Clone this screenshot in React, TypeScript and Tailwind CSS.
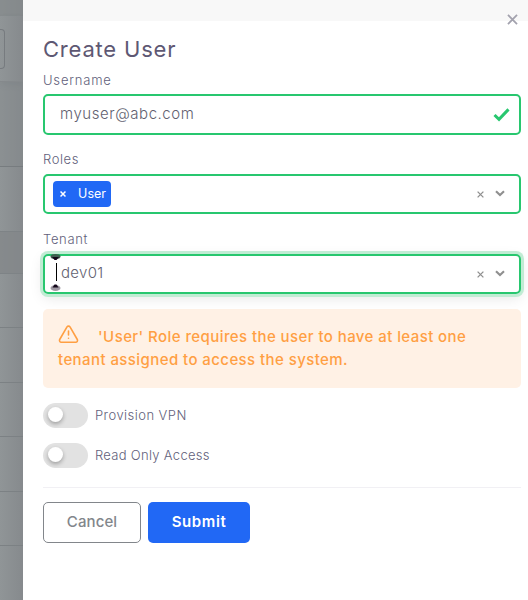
import React from "react";

function ClearIcon({ className = "", size = 7, width = 1.5 }: { className?: string; size?: number; width?: number }) {
  return (
    <svg className={className} width={size} height={size} viewBox="0 0 8 8" fill="none" stroke="currentColor" strokeWidth={width}>
      <path d="M.7.7 7.3 7.3M7.3.7.7 7.3" />
    </svg>
  );
}

function SelectControls() {
  return (
    <div className="flex items-center gap-[11px] text-[#8f8f8f]">
      <ClearIcon />
      <svg className="mb-[2px]" width="10" height="7" viewBox="0 0 10 7" fill="none" stroke="currentColor" strokeWidth="2.1">
        <path d="M1 1.2 5 5 9 1.2" />
      </svg>
    </div>
  );
}

function Label({ text, className }: { text: string; className: string }) {
  return (
    <div className="flex h-5 items-center pt-px text-[13px] font-light text-[#625f7b]">
      <span className={className}>{text}</span>
    </div>
  );
}

function Toggle({ text, className }: { text: string; className: string }) {
  return (
    <div className="flex h-[25px] items-center gap-[7px]">
      <div className="flex h-[25px] w-[45px] items-center rounded-full bg-[#e2e2e2] pb-[2px] pl-[5px]">
        <div className="h-[15px] w-[15px] rounded-full bg-white shadow-[0_2px_4px_rgba(0,0,0,0.3)]" />
      </div>
      <Label text={text} className={className} />
    </div>
  );
}

function Backdrop() {
  return (
    <div className="flex h-[600px] w-[23px] shrink-0 flex-col overflow-hidden bg-linear-to-r from-[#909597] to-[#868a8d]">
      <div className="h-4 shrink-0 bg-[#84888b]/60" />
      <div className="h-[66px] shrink-0 border-b border-[#85898c] pt-[13px] shadow-[0_3px_6px_rgba(60,65,70,0.12)]">
        <div className="h-10 w-[5px] rounded-r-[4px] border border-l-0 border-[#777b7f]" />
      </div>
      <div className="h-[85px] shrink-0 border-b border-[#777c7f] bg-[#85898c]/40" />
      <div className="h-[64px] shrink-0" />
      <div className="h-[43px] shrink-0 border-y border-[#7e8386] bg-[#83878a]/80" />
      <div className="h-[54px] shrink-0 border-b border-[#7c8184]" />
      <div className="h-[55px] shrink-0 border-b border-[#7c8184]" />
      <div className="h-[54px] shrink-0 border-b border-[#7c8184]" />
      <div className="h-[55px] shrink-0 border-b border-[#7c8184]" />
      <div className="h-[54px] shrink-0 border-b border-[#7c8184]" />
    </div>
  );
}

export default function App() {
  return (
    <div className="flex h-[600px] w-[528px] overflow-hidden bg-white font-['Inter',sans-serif]">
      <Backdrop />
      <div className="relative flex-1">
        <div className="h-[21px] bg-[#f8f8f8]" />
        <ClearIcon className="absolute top-[14px] right-[10px] text-[#a3a2ae]" size={11} width={1.3} />
        <div className="flex flex-col pr-[7px] pl-5">
          <h1 className="mt-[13px] flex h-[30px] items-center text-[22px] text-[#5e5873]">
            <span className="tracking-[0.8px]">Create User</span>
          </h1>
          <div className="mt-[6px]"><Label text="Username" className="tracking-[0.8px]" /></div>
          <div className="mt-1 flex h-[41px] items-center justify-between rounded-[5px] border-2 border-[#28c76f] pr-[9px] pl-[15px] text-[15px] font-light text-[#625f70]">
            <span className="tracking-[0.55px]">myuser@abc.com</span>
            <svg width="17" height="14" viewBox="0 0 17 14" fill="none" stroke="#28c76f" strokeWidth="3">
              <path d="M1.5 7 6 11.3 15.5 1.4" />
            </svg>
          </div>
          <div className="mt-[14px]"><Label text="Roles" className="tracking-[0.6px]" /></div>
          <div className="mt-[5px] flex h-10 items-center justify-between rounded-[5px] border-2 border-[#28c76f] pr-[14px] pl-2">
            <div className="flex h-[26px] w-[58px] items-center justify-between rounded-[4px] bg-[#2168f5] pr-[5px] pl-[7px] text-[12.5px] text-white">
              <ClearIcon size={6} width={2} />
              <span>User</span>
            </div>
            <SelectControls />
          </div>
          <div className="mt-[15px]"><Label text="Tenant" className="tracking-[0.65px]" /></div>
          <div className="relative mt-[5px] flex h-10 items-center justify-between rounded-[5px] border-2 border-[#28c76f] pr-[14px] pl-4 text-[15px] font-light text-[#625f70] shadow-[0_0_0_3px_#c1ecd4,0_4px_14px_rgba(0,0,0,0.1)]">
            <span className="pb-[2px] tracking-[0.3px]">dev01</span>
            <SelectControls />
            <svg className="absolute top-[-3px] left-[5px]" width="11" height="40" viewBox="0 0 11 40">
              <ellipse cx="5.5" cy="3.5" rx="5" ry="2.5" fill="#3f5f50" />
              <path d="M2 4h7L6.5 7h-2z" fill="#130619" />
              <path d="M6.5 10v18" stroke="#000" />
              <ellipse cx="5.5" cy="35" rx="5" ry="3" fill="#9f99a3" />
              <path d="M2.5 34.5 4.5 31.5h2L8.5 34.5z" fill="#130619" />
            </svg>
          </div>
          <div className="mt-[15px] h-[79px] rounded-[5px] bg-[#fff1e5] pt-4 pl-[15px] text-[15px] leading-[23px] font-medium tracking-[0.42px] text-[#ff9f43]">
            <div className="flex h-[23px] items-center">
              <svg className="mr-5 mb-[5px]" width="21" height="19" viewBox="0 0 20 19" fill="none" stroke="currentColor" strokeWidth="1.6" strokeLinecap="round" strokeLinejoin="round">
                <path d="M8.5 1.9 1.2 14.5a1.9 1.9 0 0 0 1.6 2.8h14.4a1.9 1.9 0 0 0 1.6-2.8L11.5 1.9a1.8 1.8 0 0 0-3 0ZM10 6v4M10 13.3h.01" />
              </svg>
              <span className="-ml-px whitespace-nowrap">'User' Role requires the user to have at least one</span>
            </div>
            <span className="whitespace-nowrap">tenant assigned to access the system.</span>
          </div>
          <div className="mt-[15px] flex flex-col gap-[15px]">
            <Toggle text="Provision VPN" className="tracking-[0.45px]" />
            <Toggle text="Read Only Access" className="tracking-[0.3px]" />
          </div>
          <div className="mt-[19px] border-t border-[#f1f0f4]" />
          <div className="mt-[14px] flex gap-[7px] text-[15px] font-medium">
            <button className="flex h-[41px] w-[98px] items-center justify-center rounded-[5px] border border-[#82868b] text-[#82868b]">
              <span className="tracking-[0.1px]">Cancel</span>
            </button>
            <button className="flex h-[41px] w-[102px] items-center justify-center rounded-[5px] bg-[#2168f5] text-white">
              <span className="font-semibold tracking-[0.6px]">Submit</span>
            </button>
          </div>
        </div>
      </div>
    </div>
  );
}
